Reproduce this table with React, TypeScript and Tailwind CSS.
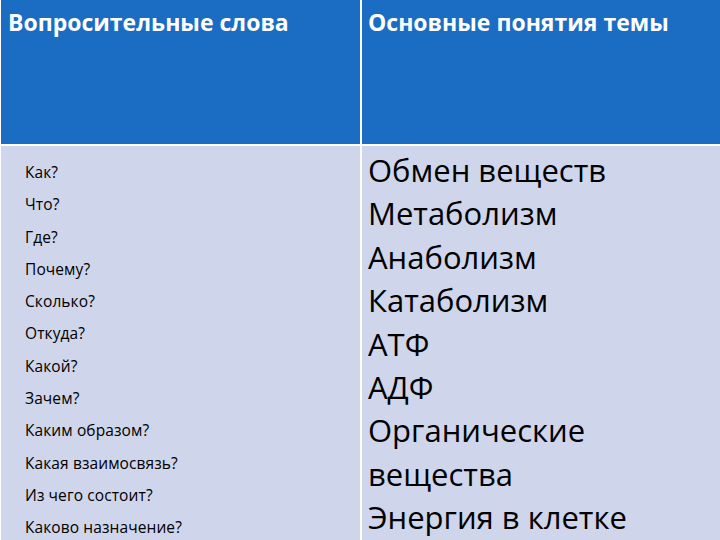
import React from 'react';

const QUESTIONS = [
  'Как?',
  'Что?',
  'Где?',
  'Почему?',
  'Сколько?',
  'Откуда?',
  'Какой?',
  'Зачем?',
  'Каким образом?',
  'Какая взаимосвязь?',
  'Из чего состоит?',
  'Каково назначение?',
];

const CONCEPTS = [
  'Обмен веществ',
  'Метаболизм',
  'Анаболизм',
  'Катаболизм',
  'АТФ',
  'АДФ',
  'Органические',
  'вещества',
  'Энергия в клетке',
];

const App: React.FC = () => {
  return (
    <div className="w-[720px] h-[540px] overflow-hidden bg-white font-['Open_Sans',sans-serif]">
      <div className="grid grid-cols-[359px_1fr] grid-rows-[144px_auto] gap-[2px] pl-[1px]">
        {/* Header */}
        <div className="bg-[#1a6dc2] px-[7px] pt-[8px] text-white font-bold text-[23px] leading-[28px]">
          Вопросительные слова
        </div>
        <div className="bg-[#1a6dc2] px-[6px] pt-[8px] text-white font-bold text-[23px] leading-[28px]">
          Основные понятия темы
        </div>

        {/* Body */}
        <div className="bg-[#cfd5ea] h-[420px] pl-[24px] pt-[10px] text-black text-[15.5px] tracking-[0.1px] leading-[32.3px]">
          {QUESTIONS.map(q => (
            <div key={q}>{q}</div>
          ))}
        </div>
        <div className="bg-[#cfd5ea] h-[420px] pl-[6px] pt-[3px] text-black text-[31px] leading-[43.4px]">
          {CONCEPTS.map(c => (
            <div key={c}>{c}</div>
          ))}
        </div>
      </div>
    </div>
  );
};

export default App;
